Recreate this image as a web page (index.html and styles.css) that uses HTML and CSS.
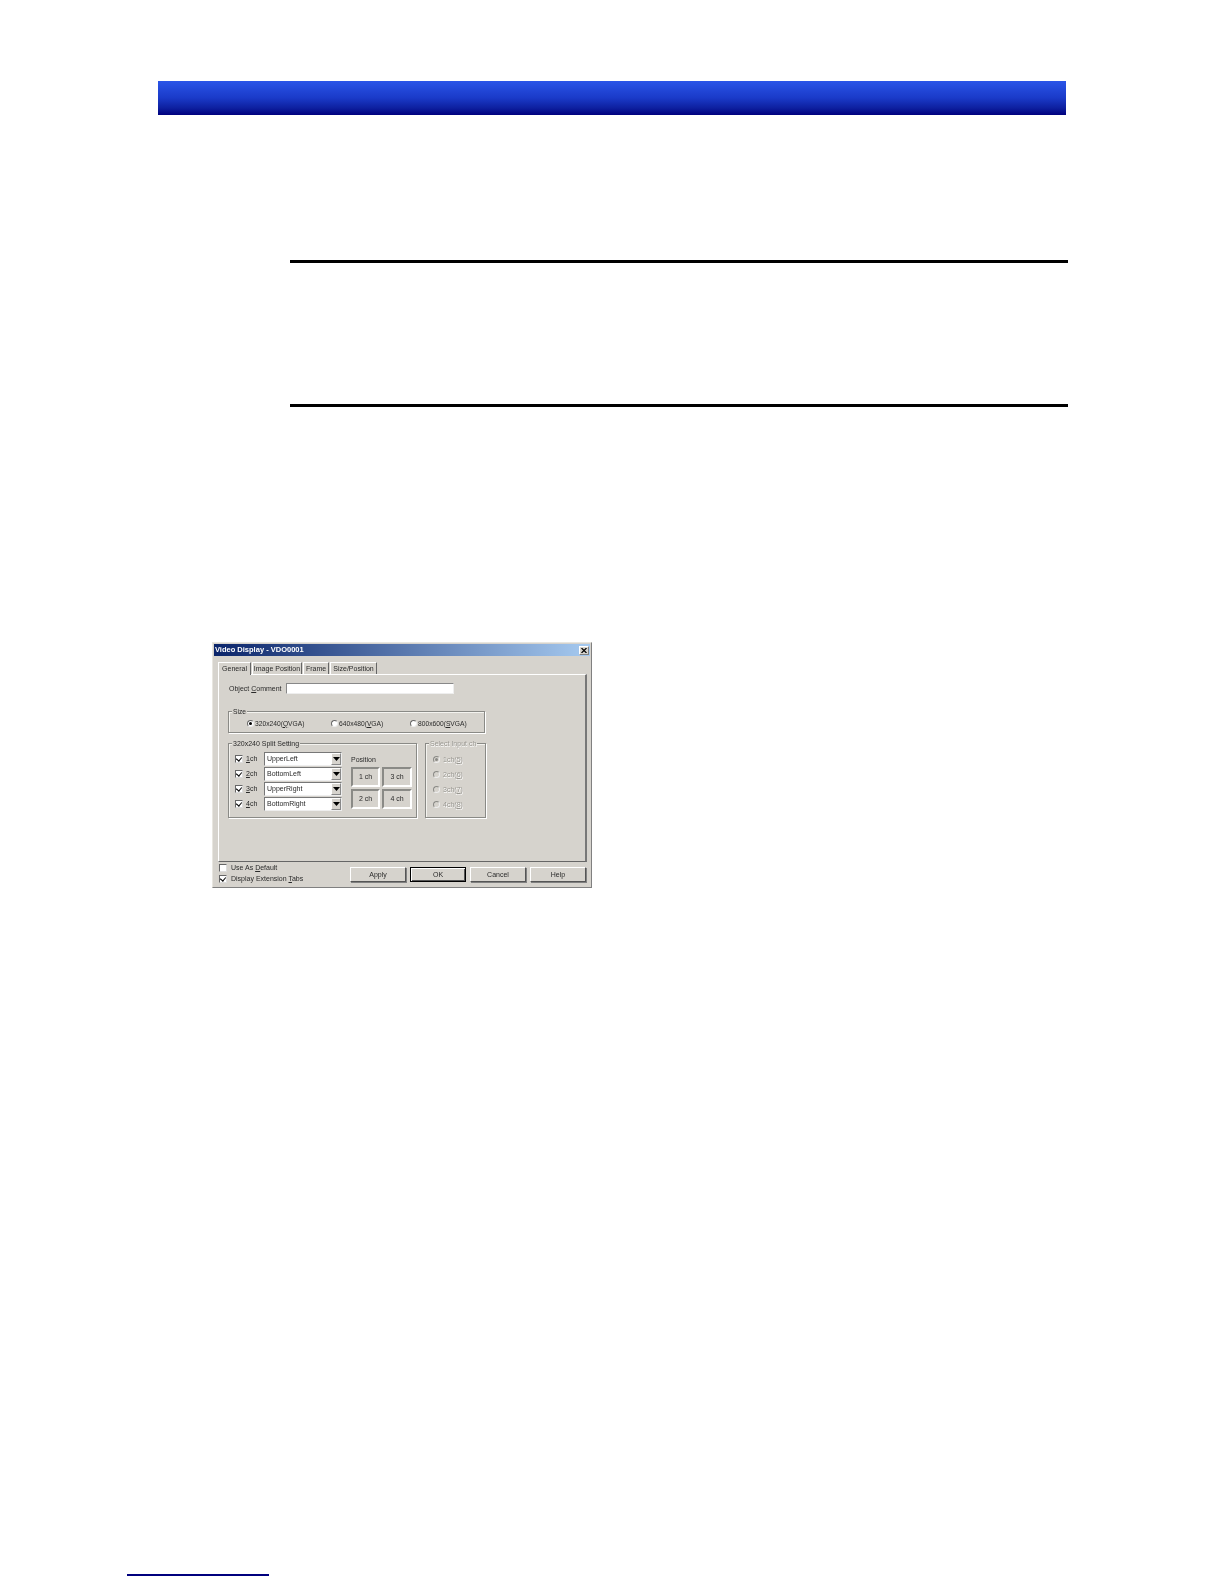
FILE: index.html
```html
<!DOCTYPE html>
<html lang="en">
<head>
<meta charset="utf-8">
<title>Video Display</title>
<link rel="stylesheet" href="styles.css">
</head>
<body>
<div class="page">
  <div class="banner"></div>
  <div class="rule rule-a"></div>
  <div class="rule rule-b"></div>

  <div class="dialog">
    <div class="titlebar">
      <span>Video Display - VDO0001</span>
      <span class="close"><svg viewBox="0 0 6 5" width="6" height="5"><path d="M0.5 0L5.5 5M5.5 0L0.5 5" stroke="#000" stroke-width="1.2" fill="none"/></svg></span>
    </div>
    <div class="tabs">
      <span class="tab tab-active tab-w1">General</span>
      <span class="tab tab-w2">Image Position</span>
      <span class="tab tab-w3">Frame</span>
      <span class="tab tab-w4">Size/Position</span>
    </div>
    <div class="panel">
      <div class="comment-row">
        <span class="comment-label">Object <u>C</u>omment</span>
        <span class="input"></span>
      </div>
      <div class="group size-group">
        <span class="legend">Size</span>
        <span class="radio-item item-a"><i class="radio on"></i><span>320x240(<u>Q</u>VGA)</span></span>
        <span class="radio-item item-b"><i class="radio"></i><span>640x480(<u>V</u>GA)</span></span>
        <span class="radio-item item-c"><i class="radio"></i><span>800x600(<u>S</u>VGA)</span></span>
      </div>
      <div class="groups">
        <div class="group split-group">
          <span class="legend">320x240 Split Setting</span>
          <div class="channels">
            <div class="channel"><i class="check on"></i><span class="ch-label"><u>1</u>ch</span><span class="combo"><span>UpperLeft</span><b class="arrow"><svg viewBox="0 0 7 4" width="7" height="4"><path d="M0 0H7L3.5 4Z" fill="#000"/></svg></b></span></div>
            <div class="channel"><i class="check on"></i><span class="ch-label"><u>2</u>ch</span><span class="combo"><span>BottomLeft</span><b class="arrow"><svg viewBox="0 0 7 4" width="7" height="4"><path d="M0 0H7L3.5 4Z" fill="#000"/></svg></b></span></div>
            <div class="channel"><i class="check on"></i><span class="ch-label"><u>3</u>ch</span><span class="combo"><span>UpperRight</span><b class="arrow"><svg viewBox="0 0 7 4" width="7" height="4"><path d="M0 0H7L3.5 4Z" fill="#000"/></svg></b></span></div>
            <div class="channel"><i class="check on"></i><span class="ch-label"><u>4</u>ch</span><span class="combo"><span>BottomRight</span><b class="arrow"><svg viewBox="0 0 7 4" width="7" height="4"><path d="M0 0H7L3.5 4Z" fill="#000"/></svg></b></span></div>
          </div>
          <div class="position">
            <div class="pos-label">Position</div>
            <div class="pos-grid">
              <span class="pos-btn">1 ch</span>
              <span class="pos-btn">3 ch</span>
              <span class="pos-btn">2 ch</span>
              <span class="pos-btn">4 ch</span>
            </div>
          </div>
        </div>
        <div class="group select-group">
          <span class="legend legend-off">Select Input ch</span>
          <div class="select-row"><i class="radio on off"></i><span>1ch(<u>5</u>)</span></div>
          <div class="select-row"><i class="radio off"></i><span>2ch(<u>6</u>)</span></div>
          <div class="select-row"><i class="radio off"></i><span>3ch(<u>7</u>)</span></div>
          <div class="select-row"><i class="radio off"></i><span>4ch(<u>8</u>)</span></div>
        </div>
      </div>
    </div>
    <div class="footer">
      <div class="footer-checks">
        <div class="footer-check"><i class="check"></i><span>Use As <u>D</u>efault</span></div>
        <div class="footer-check"><i class="check on"></i><span>Display Extension <u>T</u>abs</span></div>
      </div>
      <div class="footer-buttons">
        <span class="btn">Apply</span>
        <span class="btn btn-default">OK</span>
        <span class="btn">Cancel</span>
        <span class="btn">Help</span>
      </div>
    </div>
  </div>

  <div class="footnote-line"></div>
</div>
</body>
</html>
```

FILE: styles.css
```css
* { box-sizing: border-box; }
html, body { margin: 0; padding: 0; background: #fff; }
body { font-family: "Liberation Sans", Arial, sans-serif; }
.page { height: 1584px; overflow: hidden; padding-top: 81px; }

.banner {
  margin-left: 158px;
  width: 908px;
  height: 34px;
  background: linear-gradient(to bottom, #2a55e8 0%, #1a3ac8 50%, #0d1f9e 80%, #00007e 100%);
}
.rule { height: 3px; background: #000; margin-left: 290px; width: 778px; }
.rule-a { margin-top: 145px; }
.rule-b { margin-top: 141px; }

.dialog {
  margin: 235px 0 0 212px;
  width: 380px;
  height: 246px;
  background: #d6d3cd;
  border: 1px solid #808080;
  border-top-color: #e8e6e0;
  border-left-color: #e8e6e0;
  padding: 1px;
  font-size: 7px;
  line-height: 10px;
  color: #2a2a2a;
  white-space: nowrap;
  filter: blur(0.3px);
}
.titlebar {
  height: 12px;
  display: flex;
  justify-content: space-between;
  align-items: center;
  padding: 0 1px 0 1px;
  background: linear-gradient(to right, #0a246a, #a6caf0);
  color: #fff;
  font-size: 7.5px;
  font-weight: bold;
}
.close {
  width: 10px;
  height: 9px;
  background: #d6d3cd;
  border: 1px solid #808080;
  border-top-color: #fff;
  border-left-color: #fff;
  display: flex;
  align-items: center;
  justify-content: center;
}
.close svg { display: block; }

.tabs { display: flex; align-items: flex-end; height: 18px; padding-left: 4px; gap: 1px; }
.tab {
  height: 12px;
  text-align: center;
  line-height: 12px;
  border: 1px solid #fff;
  border-right-color: #666;
  border-bottom: none;
}
.tab-active { height: 13px; line-height: 11px; margin-bottom: -1px; background: #d6d3cd; position: relative; }
.tab-w1 { width: 33px; }
.tab-w2 { width: 50px; }
.tab-w3 { width: 26px; }
.tab-w4 { width: 47px; }

.panel {
  margin-left: 4px;
  width: 369px;
  height: 188px;
  border: 1px solid #fff;
  border-right: 2px solid #777;
  border-bottom: 1px solid #666;
  padding: 8px 0 0 9px;
}
.comment-row { display: flex; align-items: center; height: 11px; }
.comment-label { width: 58px; padding-left: 1px; }
.input { width: 168px; height: 11px; background: #fff; border: 1px solid #888; border-right-color: #eee; border-bottom-color: #eee; }

.group {
  position: relative;
  border: 1px solid #8a8a86;
  box-shadow: 1px 1px 0 #fff, inset 1px 1px 0 #f4f3ef;
}
.legend {
  position: absolute;
  top: -5px;
  left: 3px;
  padding: 0 1px;
  background: #d6d3cd;
}
.legend-off { color: #9a9892; text-shadow: 0.5px 0.5px 0 #fff; }

.size-group {
  margin-top: 17px;
  width: 257px;
  height: 22px;
  display: flex;
  align-items: center;
  padding-left: 18px;
  padding-top: 3px;
  font-size: 6.7px;
}
.radio-item { display: flex; align-items: center; }
.item-a { width: 84px; }
.item-b { width: 79px; }
.item-c { width: 70px; }

.radio {
  flex: none;
  display: inline-block;
  width: 7px;
  height: 7px;
  border-radius: 50%;
  background: #fff;
  border: 1px solid #666;
  border-right-color: #eee;
  border-bottom-color: #eee;
  margin-right: 1px;
  position: relative;
}
.radio.on::after {
  content: "";
  position: absolute;
  left: 1px;
  top: 1px;
  width: 3px;
  height: 3px;
  border-radius: 50%;
  background: #000;
}
.radio.off { background: #d6d3cd; border-color: #8a8a86; border-right-color: #eee; border-bottom-color: #eee; }
.radio.off.on::after { background: #8a8a86; }

.check {
  flex: none;
  display: inline-block;
  width: 8px;
  height: 8px;
  background: #fff;
  border: 1px solid #666;
  border-right-color: #ddd;
  border-bottom-color: #ddd;
  position: relative;
}
.check.on::after {
  content: "";
  position: absolute;
  left: 1px;
  top: 0;
  width: 3px;
  height: 4px;
  border: solid #000;
  border-width: 0 1.3px 1.3px 0;
  transform: rotate(40deg);
}

.groups { display: flex; gap: 8px; margin-top: 10px; }
.split-group {
  width: 189px;
  height: 75px;
  display: flex;
  padding: 7px 0 0 6px;
}
.channels { width: 116px; flex: none; }
.channel { display: flex; align-items: center; height: 15px; }
.ch-label { width: 21px; padding-left: 3px; flex: none; }
.combo {
  width: 78px;
  height: 14px;
  flex: none;
  display: flex;
  align-items: center;
  justify-content: space-between;
  background: #fff;
  border: 1px solid #777;
  border-right-color: #eee;
  border-bottom-color: #eee;
  padding-left: 2px;
}
.arrow {
  width: 10px;
  height: 12px;
  display: flex;
  align-items: center;
  justify-content: center;
  background: #d6d3cd;
  border: 1px solid #888;
  border-top-color: #fff;
  border-left-color: #fff;
}
.arrow svg { display: block; }
.pos-label { height: 16px; line-height: 18px; }
.pos-grid { display: grid; grid-template-columns: 29px 30px; grid-template-rows: 20px 20px; gap: 2px; }
.pos-btn {
  display: flex;
  align-items: center;
  justify-content: center;
  border: 2px solid #fff;
  border-top-color: #8a8a86;
  border-left-color: #8a8a86;
}

.select-group { width: 61px; height: 75px; padding: 8px 0 0 7px; color: #9a9892; text-shadow: 0.5px 0.5px 0 #fff; }
.select-row { display: flex; align-items: center; height: 15px; gap: 3px; }
.select-row .radio { margin-right: 0; }

.footer { display: flex; justify-content: space-between; padding: 0 4px 0 5px; }
.footer-checks { padding-top: 1px; }
.footer-check { display: flex; align-items: center; height: 10.5px; gap: 4px; }
.footer-buttons { display: flex; gap: 4px; padding-top: 5px; }
.btn {
  width: 56px;
  height: 15px;
  display: flex;
  align-items: center;
  justify-content: center;
  background: #d6d3cd;
  border: 1px solid #555;
  border-top-color: #fff;
  border-left-color: #fff;
  box-shadow: 1px 1px 0 #808080;
}
.btn-default { border: 1px solid #000; box-shadow: inset 1px 1px 0 #fff, inset -1px -1px 0 #555; }

.footnote-line { margin: 686px 0 0 127px; width: 142px; height: 2px; background: #00007e; }
```
